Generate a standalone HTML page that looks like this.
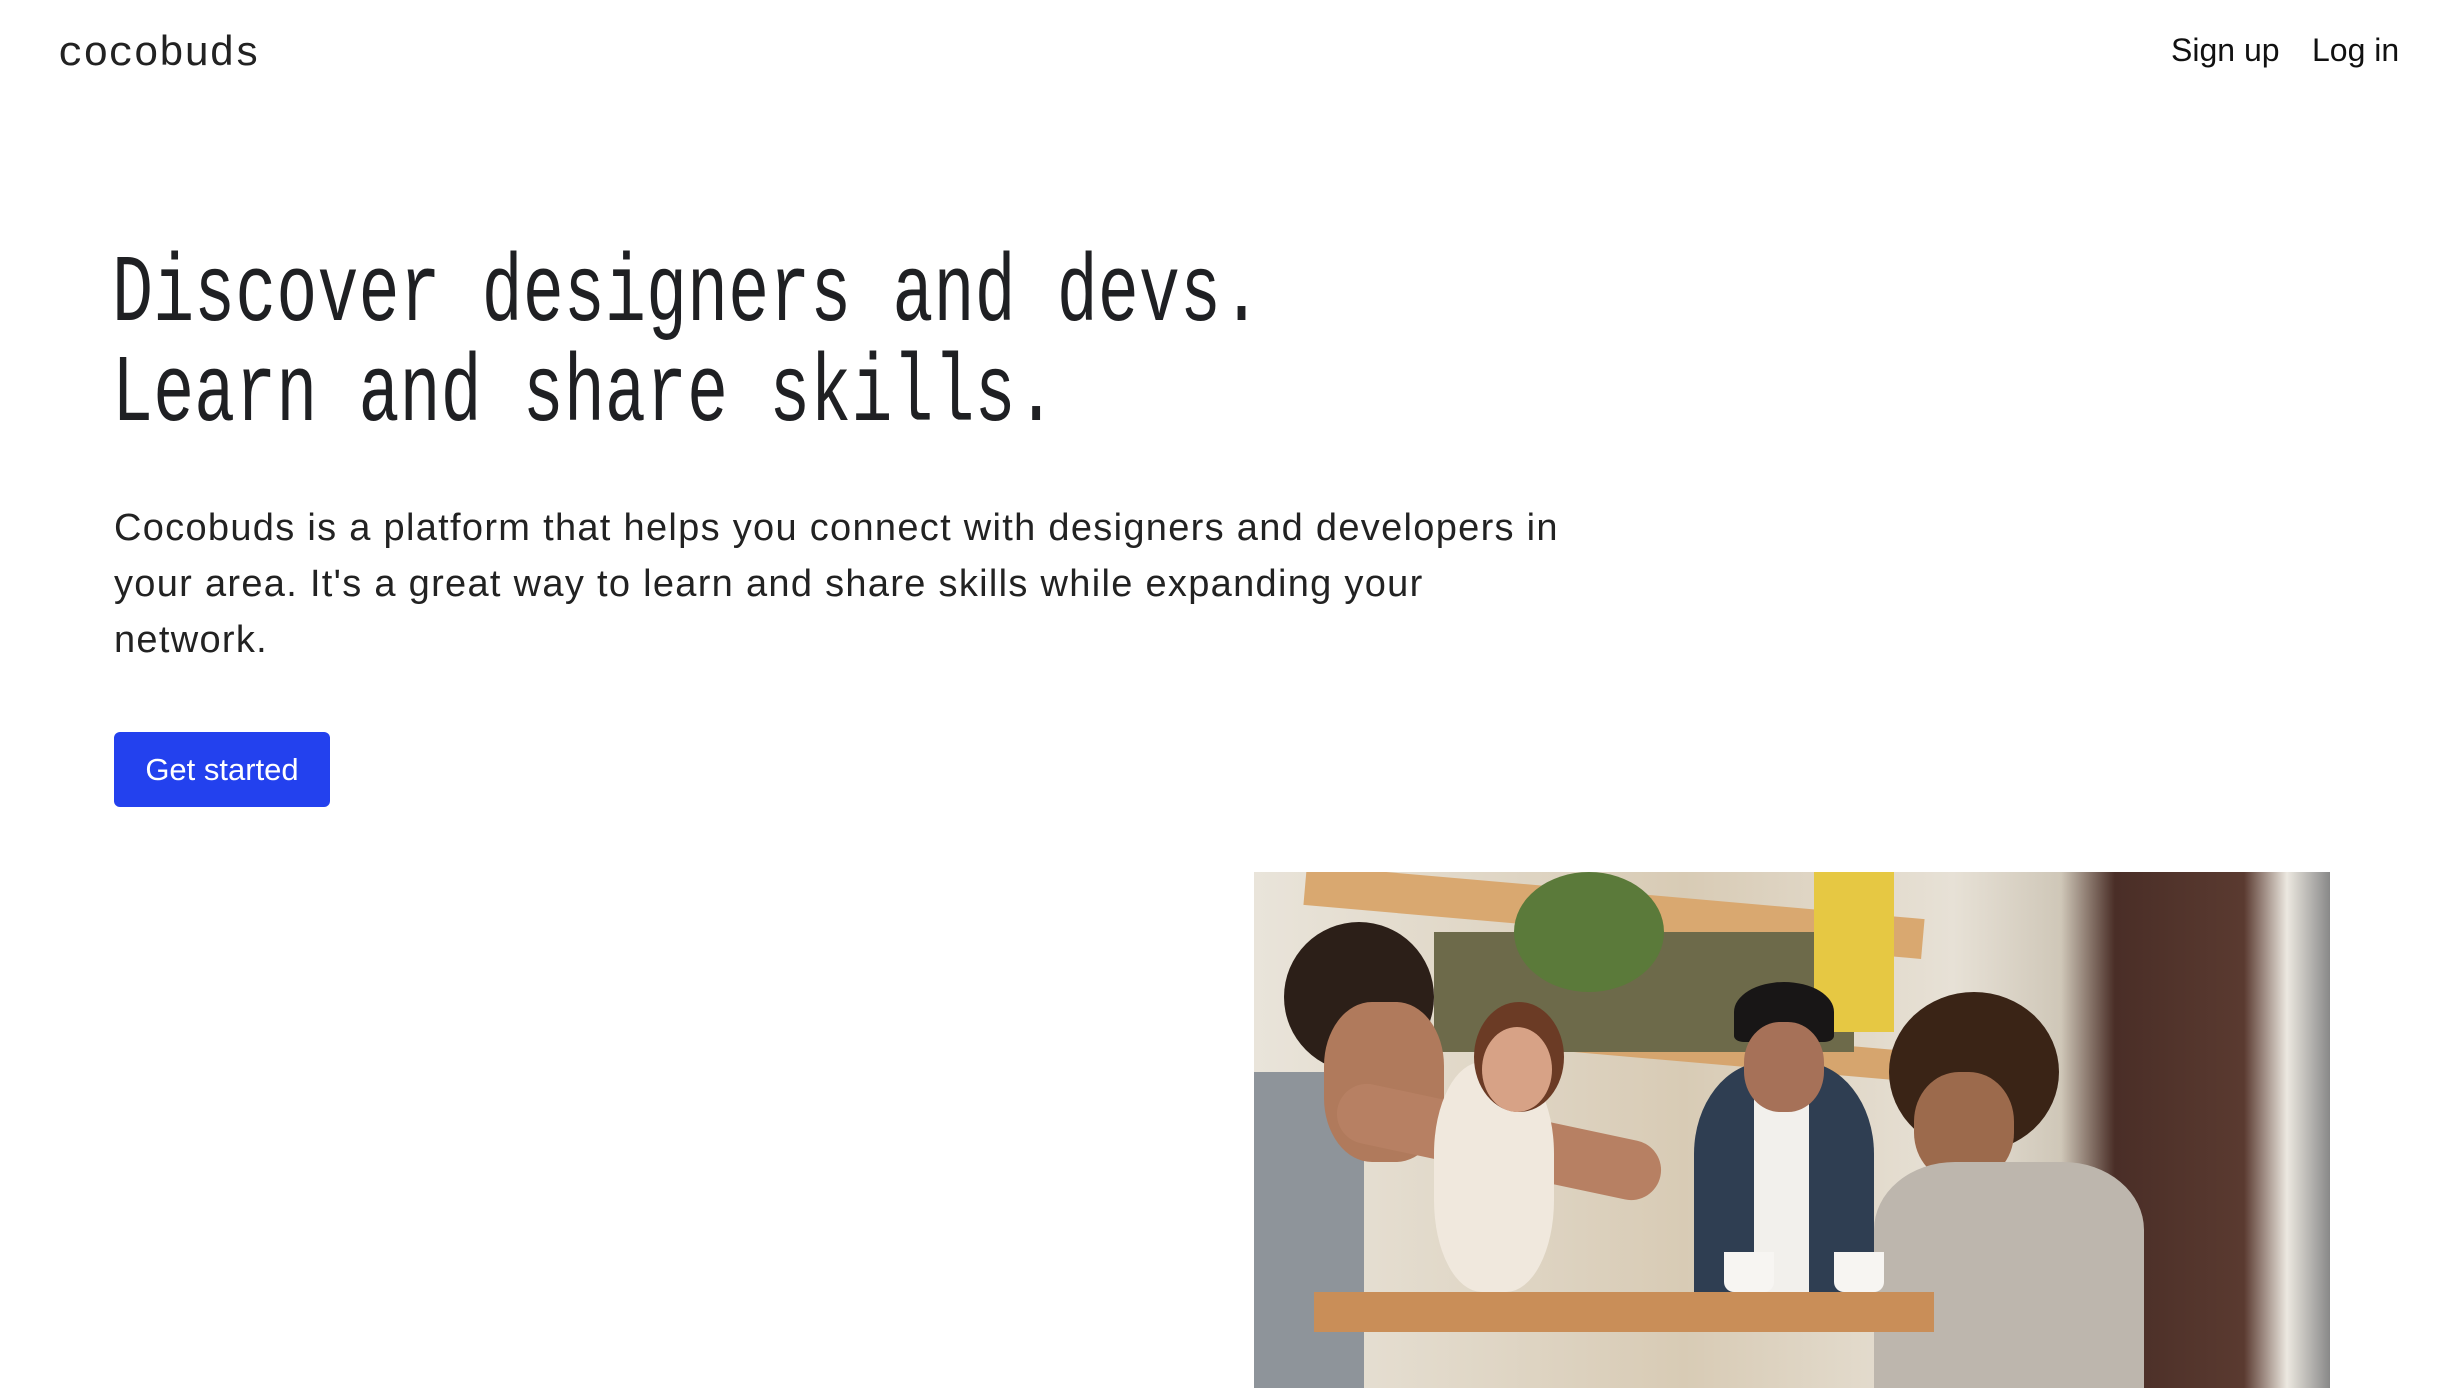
<!DOCTYPE html>
<html><head><meta charset="utf-8"><style>
html,body{margin:0;padding:0;background:#fff;width:2442px;height:1388px;overflow:hidden;position:relative;font-family:"Liberation Sans",sans-serif;color:#1f2023}
.logo{position:absolute;left:58px;top:30px;font-family:"Liberation Mono","DejaVu Sans Mono",monospace;font-size:42px;color:#222;white-space:nowrap}
.nav{position:absolute;top:32px;font-size:32px;color:#111}
h1{position:absolute;left:112px;top:245px;margin:0;font-family:"Liberation Mono","DejaVu Sans Mono",monospace;font-weight:normal;font-size:96px;line-height:100px;color:#1f2023;transform-origin:0 0;transform:scaleX(0.713);white-space:nowrap;letter-spacing:0}
p{position:absolute;left:114px;top:500px;margin:0;font-size:38px;line-height:56px;color:#222;white-space:nowrap;letter-spacing:1.3px}
.btn{position:absolute;left:114px;top:732px;width:216px;height:75px;background:#2341ee;border-radius:6px;color:#fff;font-size:31px;line-height:75px;text-align:center}
.img{position:absolute;left:1254px;top:872px;width:1076px;height:516px;overflow:hidden;background:linear-gradient(90deg,#e9e4da 0%,#d8cbb5 40%,#e7e1d6 65%,#cfc7b8 75%,#4a2e27 80%,#5a3a30 92%,#ece8e0 96%,#888 100%)}
.img div{position:absolute}
</style></head><body>
<div class="logo">cocobuds</div>
<div class="nav" style="left:2171px">Sign up</div>
<div class="nav" style="left:2312px">Log in</div>
<h1>Discover designers and devs.<br>Learn and share skills.</h1>
<p>Cocobuds is a platform that helps you connect with designers and developers in<br>your area. It's a great way to learn and share skills while expanding your<br>network.</p>
<div class="btn">Get started</div>
<div class="img">
 <div style="left:50px;top:20px;width:620px;height:40px;background:#d9a870;transform:rotate(5deg)"></div>
 <div style="left:200px;top:160px;width:470px;height:30px;background:#d6a56e;transform:rotate(5deg)"></div>
 <div style="left:180px;top:60px;width:420px;height:120px;background:#6d6a4a"></div>
 <div style="left:560px;top:0;width:80px;height:160px;background:#e6c843"></div>
 <div style="left:260px;top:0;width:150px;height:120px;background:#5b7a3a;border-radius:50%"></div>
 <div style="left:0;top:200px;width:110px;height:316px;background:#8e949a"></div>
 <div style="left:30px;top:50px;width:150px;height:150px;background:#2c1f18;border-radius:50%"></div>
 <div style="left:70px;top:130px;width:120px;height:160px;background:#b07a5c;border-radius:40%"></div>
 <div style="left:80px;top:240px;width:330px;height:60px;background:#b78063;border-radius:30px;transform:rotate(12deg)"></div>
 <div style="left:180px;top:190px;width:120px;height:230px;background:#f0e8dd;border-radius:40%"></div>
 <div style="left:220px;top:130px;width:90px;height:110px;background:#6b3b25;border-radius:50%"></div>
 <div style="left:228px;top:155px;width:70px;height:85px;background:#d7a286;border-radius:50%"></div>
 <div style="left:440px;top:190px;width:180px;height:230px;background:#2f3e52;border-radius:40% 40% 0 0"></div>
 <div style="left:500px;top:210px;width:55px;height:210px;background:#f2f0ec"></div>
 <div style="left:480px;top:110px;width:100px;height:60px;background:#181616;border-radius:50% 50% 10% 10%"></div>
 <div style="left:490px;top:150px;width:80px;height:90px;background:#a67158;border-radius:45%"></div>
 <div style="left:635px;top:120px;width:170px;height:160px;background:#3a2416;border-radius:50%"></div>
 <div style="left:660px;top:200px;width:100px;height:110px;background:#9c6a4c;border-radius:45%"></div>
 <div style="left:620px;top:290px;width:270px;height:226px;background:#bdb6ad;border-radius:30% 30% 0 0"></div>
 <div style="left:60px;top:420px;width:620px;height:40px;background:#c98e58"></div>
 <div style="left:470px;top:380px;width:50px;height:40px;background:#f7f5f2;border-radius:0 0 10px 10px"></div>
 <div style="left:580px;top:380px;width:50px;height:40px;background:#f7f5f2;border-radius:0 0 10px 10px"></div>
</div>
</body></html>
